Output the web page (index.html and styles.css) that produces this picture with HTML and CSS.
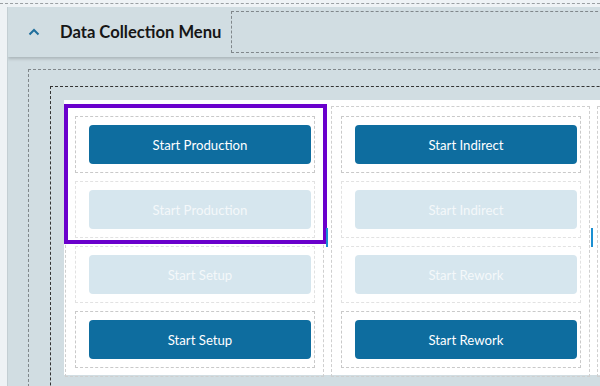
FILE: index.html
```html
<!DOCTYPE html>
<html>

<head>
  <title>Data Collection Menu</title>
  <meta charset="UTF-8">
  <meta name="viewport" content="width=device-width, initial-scale=1.0">
  <link rel="stylesheet" href="styles.css">
</head>

<body>
  <div class="topline"></div>
  <div class="panel">
    <div class="head">
      <svg class="chevron" width="12" height="8" viewBox="0 0 12 8">
        <polyline points="1.5,6.5 6,2 10.5,6.5" fill="none" stroke="#1f6e9c" stroke-width="2" />
      </svg>
      <h1>Data Collection Menu</h1>
      <div class="slot"></div>
    </div>
    <div class="body">
      <div class="outer">
        <div class="inner">
          <div class="sheet">
            <div class="col first">
              <div class="cell"><button class="btn">Start Production</button></div>
              <div class="cell off"><button class="btn" disabled>Start Production</button></div>
              <div class="cell off"><button class="btn" disabled>Start Setup</button></div>
              <div class="cell"><button class="btn">Start Setup</button></div>
            </div>
            <div class="col">
              <div class="cell"><button class="btn">Start Indirect</button></div>
              <div class="cell off"><button class="btn" disabled>Start Indirect</button></div>
              <div class="cell off"><button class="btn" disabled>Start Rework</button></div>
              <div class="cell"><button class="btn">Start Rework</button></div>
            </div>
            <div class="col"></div>
            <div class="select"></div>
            <div class="handle one"></div>
            <div class="handle two"></div>
          </div>
        </div>
      </div>
    </div>
  </div>
</body>

</html>
```

FILE: styles.css
```css
body {
  margin: 0;
  background-color: #eef2f5;
  font-family: Lato, "Noto Sans", sans-serif;
  width: 600px;
  height: 386px;
  overflow: hidden;
}

.topline {
  height: 3px;
  border-bottom: 1px dashed #9a9fa3;
  margin-bottom: 3px;
}

.panel {
  margin-left: 7px;
  width: 592px;
  height: 379px;
  overflow: hidden;
  background-color: #d1dde2;
  border-left: 1px solid #c3ced3;
}

.head {
  display: flex;
  align-items: center;
  height: 50px;
  position: relative;
  box-shadow: 0 2px 3px rgba(0, 0, 0, .18);
}

.chevron {
  flex: none;
  margin-left: 20px;
}

h1 {
  flex: none;
  font-size: 16.6px;
  font-weight: bold;
  color: #161616;
  margin: 0 0 0 20px;
  white-space: nowrap;
}

.slot {
  flex: none;
  width: 400px;
  height: 40px;
  margin-left: 10px;
  border: 1px dashed #80878b;
}

.body {
  padding: 12px 0 0 20px;
}

.outer {
  border: 1px dashed #80878b;
  padding: 16px 0 0 21px;
  height: 400px;
  width: 700px;
}

.inner {
  border: 1px dashed #333;
  padding: 13px 0 0 13px;
  height: 400px;
}

.sheet {
  position: relative;
  background-color: #fff;
  height: 275px;
  padding: 6px 0 0 1px;
  box-sizing: border-box;
  display: flex;
  gap: 7px;
}

.col {
  width: 259px;
  height: 271px;
  flex: none;
  box-sizing: border-box;
  border: 1px dashed #cfcfcf;
  padding: 9px 8px 0 9px;
  display: flex;
  flex-direction: column;
  gap: 8px;
}

.cell {
  border: 1px dashed #c9c9c9;
  padding: 8px 3px 8px 13px;
}

.cell.off {
  border-color: #e2e2e2;
}

.btn {
  display: block;
  width: 100%;
  height: 39px;
  border: none;
  border-radius: 4px;
  background-color: #0e6d9f;
  color: #fff;
  font-family: Lato, "Noto Sans", sans-serif;
  font-size: 13.2px;
  cursor: pointer;
}

.btn:disabled {
  background-color: #d6e6ee;
  color: #f4f8fa;
  cursor: default;
}

.select {
  position: absolute;
  left: 0;
  top: 4px;
  width: 263px;
  height: 140px;
  box-sizing: border-box;
  border: 4px solid #6a00cc;
}

.handle {
  position: absolute;
  top: 128px;
  width: 2px;
  height: 19px;
  background-color: #1b8fd2;
}

.handle.one {
  left: 262px;
}

.handle.two {
  left: 527px;
}
```
